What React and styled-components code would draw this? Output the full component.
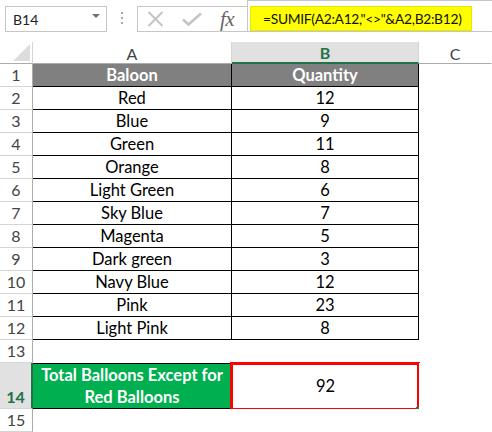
import React from "react";
import styled, { createGlobalStyle } from "styled-components";

const GlobalStyle = createGlobalStyle`
  html, body { margin: 0; padding: 0; background: #fff; }
  body { font-family: "Lato", "Noto Sans", sans-serif; color: #000; }
  * { box-sizing: border-box; }
`;

const Page = styled.div`
  width: 492px;
  height: 432px;
  overflow: hidden;
  background: #fff;
`;

const TopBar = styled.div`
  display: flex;
  align-items: flex-start;
  height: 42px;
  padding-left: 5px;
`;

const NameBox = styled.div`
  margin-top: 6px;
  width: 102px;
  height: 26px;
  border: 1px solid #c6c6c6;
  display: flex;
  align-items: center;
  justify-content: space-between;
  padding: 0 6px 0 7px;
  font-size: 14px;
  color: #222;
`;

const Caret = styled.span`
  width: 0;
  height: 0;
  border-left: 4px solid transparent;
  border-right: 4px solid transparent;
  border-top: 4px solid #707070;
  margin-top: -6px;
`;

const Dots = styled.div`
  width: 30px;
  height: 32px;
  display: flex;
  flex-direction: column;
  align-items: center;
  justify-content: center;
  gap: 3px;
  padding-top: 4px;
`;

const Dot = styled.span`
  width: 2px;
  height: 2px;
  background: #a8a8a8;
`;

const IconBox = styled.div`
  margin-top: 6px;
  width: 110px;
  height: 26px;
  border: 1px solid #c6c6c6;
  border-right: none;
  display: flex;
  align-items: center;
  padding-left: 9px;
  gap: 18px;
`;

const Fx = styled.span`
  font-family: "Liberation Serif", "DejaVu Serif", serif;
  font-style: italic;
  font-size: 21px;
  color: #666;
  margin-left: 0px;
  line-height: 1;
  letter-spacing: -0.5px;
`;

const InputBox = styled.div`
  flex: 1;
  height: 32px;
  border-top: 1px solid #c6c6c6;
  border-bottom: 1px solid #c6c6c6;
  border-left: 1px solid #c6c6c6;
  display: flex;
  align-items: flex-end;
  padding-left: 2px;
`;

const Highlight = styled.div`
  width: 222px;
  height: 25px;
  background: #ffff00;
  border: 1px solid #e6e600;
  display: flex;
  align-items: center;
  padding-left: 12px;
  font-size: 13.8px;
  letter-spacing: -0.3px;
  color: #111;
  white-space: nowrap;
`;

const Sheet = styled.div`
  display: grid;
  grid-template-columns: 33px 199px 187px 1fr;
  grid-template-rows: 22px repeat(13, 23px) 46px 23px;
`;

const Corner = styled.div`
  border-right: 1px solid #d4d4d4;
  border-bottom: 1px solid #ababab;
  display: flex;
  align-items: flex-end;
  justify-content: flex-end;
  padding: 0 2px 2px 0;
`;

const ColHeader = styled.div`
  background: ${(p) => (p.$active ? "#e1e1e1" : "#fff")};
  border-right: 1px solid ${(p) => (p.$last ? "transparent" : "#d4d4d4")};
  border-bottom: ${(p) => (p.$active ? "2px solid #217346" : "1px solid #ababab")};
  color: ${(p) => (p.$active ? "#217346" : "#444")};
  font-weight: ${(p) => (p.$active ? 700 : 400)};
  font-size: 16px;
  display: flex;
  align-items: center;
  justify-content: center;
  padding-top: 1px;
`;

const RowHeader = styled.div`
  background: ${(p) => (p.$active ? "#e1e1e1" : "#fff")};
  border-right: ${(p) => (p.$active ? "2px solid #217346" : "1px solid #ababab")};
  border-bottom: 1px solid #d4d4d4;
  color: ${(p) => (p.$active ? "#217346" : "#444")};
  font-weight: ${(p) => (p.$active ? 700 : 400)};
  font-size: 16px;
  display: flex;
  align-items: flex-end;
  justify-content: center;
  padding-bottom: 2px;
  line-height: 18px;
`;

const Cell = styled.div`
  position: relative;
  display: flex;
  align-items: center;
  justify-content: center;
  text-align: center;
  font-size: 16.5px;
  line-height: 22px;
  background: ${(p) =>
    p.$kind === "head" ? "#808080" : p.$kind === "total" ? "#00b050" : "#fff"};
  color: ${(p) => (p.$kind === "head" || p.$kind === "total" ? "#fff" : "#000")};
  font-weight: ${(p) => (p.$kind === "head" || p.$kind === "total" ? 700 : 400)};
  border-right: ${(p) => (p.$boxed ? "1px solid #000" : "none")};
  border-bottom: ${(p) => (p.$boxed ? "1px solid #000" : "none")};
  border-top: ${(p) => (p.$kind === "total" ? "1px solid #000" : "none")};
  padding-bottom: ${(p) => (p.$kind === "total" ? "1px" : "0")};
`;

const Selection = styled.div`
  position: absolute;
  top: -1px;
  left: -2px;
  right: -1px;
  bottom: -2px;
  border: 3px solid #ff0000;
  pointer-events: none;
`;

const Handle = styled.div`
  position: absolute;
  right: -2px;
  bottom: -3px;
  width: 5px;
  height: 5px;
  background: #217346;
`;

const rows = [
  ["Red", 12],
  ["Blue", 9],
  ["Green", 11],
  ["Orange", 8],
  ["Light Green", 6],
  ["Sky Blue", 7],
  ["Magenta", 5],
  ["Dark green", 3],
  ["Navy Blue", 12],
  ["Pink", 23],
  ["Light Pink", 8],
];

export default function App() {
  return (
    <Page>
      <GlobalStyle />
      <TopBar>
        <NameBox>
          <span>B14</span>
          <Caret />
        </NameBox>
        <Dots>
          <Dot />
          <Dot />
          <Dot />
        </Dots>
        <IconBox>
          <svg width="17" height="16" viewBox="0 0 17 16">
            <path d="M1.5 1 L15.5 15 M15.5 1 L1.5 15" stroke="#c4c4c4" strokeWidth="2" fill="none" />
          </svg>
          <svg width="20" height="14" viewBox="0 0 20 14">
            <path d="M1 7.5 L6.5 12.5 L19 1.5" stroke="#c4c4c4" strokeWidth="2.6" fill="none" />
          </svg>
          <Fx>fx</Fx>
        </IconBox>
        <InputBox>
          <Highlight>=SUMIF(A2:A12,"&lt;&gt;"&amp;A2,B2:B12)</Highlight>
        </InputBox>
      </TopBar>
      <Sheet>
        <Corner>
          <svg width="17" height="17" viewBox="0 0 17 17">
            <path d="M17 0 L17 17 L0 17 Z" fill="#dcdcdc" />
          </svg>
        </Corner>
        <ColHeader>A</ColHeader>
        <ColHeader $active>B</ColHeader>
        <ColHeader $last>C</ColHeader>

        <RowHeader>1</RowHeader>
        <Cell $kind="head" $boxed>Baloon</Cell>
        <Cell $kind="head" $boxed>Quantity</Cell>
        <Cell />

        {rows.map(([name, qty], i) => (
          <React.Fragment key={name + i}>
            <RowHeader>{i + 2}</RowHeader>
            <Cell $boxed>{name}</Cell>
            <Cell $boxed>{qty}</Cell>
            <Cell />
          </React.Fragment>
        ))}

        <RowHeader>13</RowHeader>
        <Cell />
        <Cell />
        <Cell />

        <RowHeader $active>14</RowHeader>
        <Cell $kind="total" $boxed>
          Total Balloons Except for
          <br />
          Red Balloons
        </Cell>
        <Cell>
          92
          <Selection />
          <Handle />
        </Cell>
        <Cell />

        <RowHeader>15</RowHeader>
        <Cell />
        <Cell />
        <Cell />
      </Sheet>
    </Page>
  );
}
